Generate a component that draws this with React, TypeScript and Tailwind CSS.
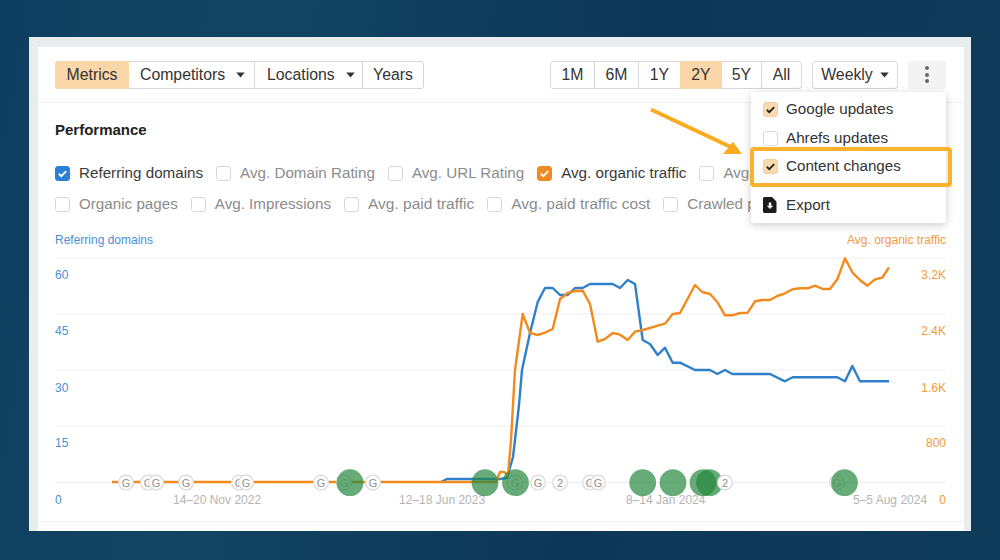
const FONT = "font-['Liberation_Sans','Helvetica_Neue',Arial,sans-serif]";

const BLUE_LINE =
  '441,482 447,479 500,479 507,478 513,457 519,405 522,370 530,333 537.7,302 545,288 552.7,288 560,295 567.7,295 575,288 582.7,288 590,284 612.7,284 620,288 627.7,280 635,284 642.7,340 650,344 657.7,355 665,347.7 672.7,362.7 680,362.7 695,370 710,370 717.3,374 725,370 732.3,374 770,374 785,381.3 792.7,377.3 837.3,377.3 845,381.3 852.3,366 860,381.3 889,381.3';

const ORANGE_LINE =
  '112,482 496,482 500,472 504,472 508,475 511,440 515,370 522.7,314 530,333 537.7,335 545,332.7 552.7,329 560,299 567.7,293 575,291 582.7,290.7 590,304 597.7,341.7 605,339 612.7,333 620,334.7 627.7,340 635,331.7 642.7,330 650,328 657.7,325.7 665,323.7 672.7,314 680,313 695,285 702.3,292 710,294 717.3,302 725,315.3 732.3,315.3 740,313 747.7,312.7 755,301.3 762.3,300 770,300 777.3,296 785,293.3 792.7,289.3 800,288.3 807.7,288.3 815,285.7 822.7,289 830,289 837.3,279.3 845,258.3 852.3,272.3 860,280 867.3,285.7 875,279.3 882.3,277.7 889,267.3';

const GRID_Y = [258, 314, 370, 426, 482.5];
const LEFT_TICKS = [['60', 279], ['45', 335], ['30', 392], ['15', 447], ['0', 504]] as const;
const RIGHT_TICKS = [['3.2K', 279], ['2.4K', 335], ['1.6K', 392], ['800', 447], ['0', 504]] as const;
const DATES = [
  ['14–20 Nov 2022', 173],
  ['12–18 Jun 2023', 399],
  ['8–14 Jan 2024', 626],
  ['5–5 Aug 2024', 853],
] as const;

// marker order matters, later ones sit on top
const MARKERS = [
  ['G', 126], ['G', 148], ['G', 156], ['G', 186], ['G', 239], ['G', 246], ['G', 321],
  ['G', 373], ['G', 538], ['2', 560], ['G', 590], ['G', 598],
] as const;
// these sit under a green circle and barely show through
const HIDDEN_MARKERS = [344, 515, 837];
const GREEN_X = [350, 485, 515.5, 642.7, 673, 703, 709.5, 844.5];

function Marker({ label, x, faint }: { label: string; x: number; faint?: boolean }) {
  return (
    <g>
      <circle cx={x} cy="482.5" r="7.4" fill="#fff" stroke="#dadada" strokeWidth="1.2" />
      <text x={x} y="486.5" fill={faint ? '#c4c4c4' : '#8f8f8f'}>{label}</text>
    </g>
  );
}

function Caret({ className = '' }: { className?: string }) {
  return (
    <svg viewBox="0 0 9 6" className={`w-[9px] h-[6px] ${className}`}>
      <path d="M0.3 0.5h8.4L4.5 5.6z" fill="#333" />
    </svg>
  );
}

function CheckBox({ tone }: { tone?: 'blue' | 'orange' | 'soft' }) {
  const bg =
    tone === 'blue'
      ? 'bg-[#2a7fd6] border-[#2a7fd6]'
      : tone === 'orange'
        ? 'bg-[#f08a24] border-[#f08a24]'
        : tone === 'soft'
          ? 'bg-[#fbd9ae] border-[#f6cf9f]'
          : 'bg-white border-[#d6d8da]';
  return (
    <span className={`w-[15px] h-[15px] shrink-0 rounded-[3px] border flex items-center justify-center ${bg}`}>
      {tone && (
        <svg viewBox="0 0 12 12" className="w-[11px] h-[11px]">
          <path
            d="M2 6.3l2.7 2.6L10 3.4"
            fill="none"
            stroke={tone === 'soft' ? '#222' : '#fff'}
            strokeWidth="2"
          />
        </svg>
      )}
    </span>
  );
}

function Metric({ label, tone, wide }: { label: string; tone?: 'blue' | 'orange'; wide?: boolean }) {
  return (
    <div className="flex items-center gap-[9px] shrink-0">
      <CheckBox tone={tone} />
      <span className={`${wide ? 'text-[15.5px]' : 'text-[15.2px]'} ${tone ? 'text-[#3a3a3a]' : 'text-[#8c8c8c]'}`}>
        {label}
      </span>
    </div>
  );
}

function Chart() {
  return (
    <svg viewBox="38 232 926 289" className="w-[926px] h-[289px] block">
      <g fontFamily="'Liberation Sans', Arial, sans-serif" fontSize="12">
        <text x="55" y="244" fill="#4a90d6">Referring domains</text>
        <text x="946" y="244" fill="#f39a3c" textAnchor="end">Avg. organic traffic</text>
        {GRID_Y.map((y) => (
          <line key={y} x1="55" x2="946" y1={y} y2={y} stroke="#eeeeee" strokeWidth="1" />
        ))}
        {LEFT_TICKS.map(([t, y]) => (
          <text key={t} x="55" y={y} fill="#4a90d6">{t}</text>
        ))}
        {RIGHT_TICKS.map(([t, y]) => (
          <text key={t} x="946" y={y} fill="#f39a3c" textAnchor="end">{t}</text>
        ))}
        {DATES.map(([t, x]) => (
          <text key={t} x={x} y="504" fill="#b4b4b4">{t}</text>
        ))}
      </g>
      <polyline points={BLUE_LINE} fill="none" stroke="#2f7fcb" strokeWidth="2.4" strokeLinejoin="round" />
      <polyline points={ORANGE_LINE} fill="none" stroke="#f28a1e" strokeWidth="2.4" strokeLinejoin="round" />
      <g fontFamily="'Liberation Sans', Arial, sans-serif" fontSize="11" textAnchor="middle">
        {MARKERS.map(([t, x]) => (
          <Marker key={x} label={t} x={x} />
        ))}
        {HIDDEN_MARKERS.map((x) => (
          <Marker key={x} label="G" x={x} faint />
        ))}
      </g>
      {GREEN_X.map((x) => (
        <circle key={x} cx={x} cy="482.7" r="13.4" fill="#25873f" fillOpacity="0.7" />
      ))}
      <g fontFamily="'Liberation Sans', Arial, sans-serif" fontSize="11" textAnchor="middle">
        <Marker label="2" x={725} />
      </g>
    </svg>
  );
}

function MenuRow({ label, checked }: { label: string; checked: boolean }) {
  return (
    <div className="h-[28.5px] flex items-center gap-[8px]">
      <CheckBox tone={checked ? 'soft' : undefined} />
      <span className="text-[15.2px] text-[#333]">{label}</span>
    </div>
  );
}

export default function App() {
  return (
    <div className={`${FONT} w-[1000px] h-[560px] overflow-hidden pt-[37px] pl-[29px] bg-[linear-gradient(100deg,#0f3f60_0%,#114463_25%,#0e3757_60%,#0f3b5b_100%)]`}>
      <div className="w-[942px] h-[494px] bg-[#e9ecec] pt-[10px] pl-[9px] pr-[7px]">
        <div className="relative h-[484px] bg-white">
          {/* toolbar */}
          <div className="h-[56px] pl-[17px] pr-[18px] border-b border-[#eeeeee] flex items-center justify-between">
            <div className="flex h-[28px] text-[15.8px] text-[#333] border border-[#d5d7d9] rounded-[3px]">
              <div className="w-[74px] bg-[#fbd6a8] flex items-center justify-center -my-px -ml-px rounded-l-[3px]">Metrics</div>
              <div className="w-[126px] border-r border-[#d5d7d9] flex items-center gap-[11px] pl-[11px]">
                Competitors <Caret />
              </div>
              <div className="w-[108px] border-r border-[#d5d7d9] flex items-center gap-[11px] pl-[12px]">
                Locations <Caret />
              </div>
              <div className="w-[60px] flex items-center justify-center">Years</div>
            </div>
            <div className="flex items-center">
              <div className="flex h-[28px] text-[15.8px] text-[#333] border border-[#d5d7d9] rounded-[3px] mr-[10px]">
                <div className="w-[44px] border-r border-[#d5d7d9] flex items-center justify-center">1M</div>
                <div className="w-[44px] border-r border-[#d5d7d9] flex items-center justify-center">6M</div>
                <div className="w-[41px] flex items-center justify-center">1Y</div>
                <div className="w-[42px] bg-[#fbd6a8] -my-px flex items-center justify-center">2Y</div>
                <div className="w-[40px] border-r border-[#d5d7d9] flex items-center justify-center">5Y</div>
                <div className="w-[39px] flex items-center justify-center">All</div>
              </div>
              <div className="w-[86px] h-[28px] text-[15.8px] text-[#333] border border-[#d5d7d9] rounded-[3px] flex items-center justify-center gap-[7px] mr-[10px]">
                Weekly <Caret />
              </div>
              <div className="w-[38px] h-[28px] bg-[#f3f3f3] rounded-[3px] flex flex-col items-center justify-center gap-[2.5px]">
                <span className="w-[4px] h-[4px] rounded-full bg-[#666]" />
                <span className="w-[4px] h-[4px] rounded-full bg-[#666]" />
                <span className="w-[4px] h-[4px] rounded-full bg-[#666]" />
              </div>
            </div>
          </div>

          {/* performance */}
          <div className="px-[17px]">
            <h2 className="mt-[17px] h-[20px] leading-[20px] text-[15px] font-bold text-[#222]">Performance</h2>
            {/* rows stop where the open menu starts */}
            <div className="mt-[23px] w-[696px] h-[20px] flex items-center gap-[13px] overflow-hidden">
              <Metric label="Referring domains" tone="blue" />
              <Metric label="Avg. Domain Rating" />
              <Metric label="Avg. URL Rating" />
              <Metric label="Avg. organic traffic" tone="orange" />
              <Metric label="Avg. organic pages" />
            </div>
            <div className="mt-[11px] w-[696px] h-[20px] flex items-center gap-[13px] overflow-hidden">
              <Metric label="Organic pages" />
              <Metric label="Avg. Impressions" />
              <Metric label="Avg. paid traffic" wide />
              <Metric label="Avg. paid traffic cost" wide />
              <Metric label="Crawled pages" />
            </div>
          </div>

          <div className="mt-[18px] border-b border-[#eeeeee]">
            <Chart />
          </div>

          {/* dropdown */}
          <div className="absolute left-[713px] top-[45px] w-[195px] h-[131px] bg-white rounded-[3px] shadow-[0_2px_10px_rgba(0,0,0,0.2)] px-[12px] pt-[3.6px]">
            <MenuRow label="Google updates" checked />
            <MenuRow label="Ahrefs updates" checked={false} />
            <MenuRow label="Content changes" checked />
            <div className="mt-[10px] h-[28px] flex items-center gap-[9px]">
              <svg viewBox="0 0 14 16" className="w-[14px] h-[16px]">
                <path d="M1.5 0H9l4.5 4.5V14.5A1.5 1.5 0 0 1 12 16H1.5A1.5 1.5 0 0 1 0 14.5V1.5A1.5 1.5 0 0 1 1.5 0z" fill="#1c1c1c" />
                <path d="M5.8 5.5h2.4v3.2h2L7 12 3.8 8.7h2z" fill="#fff" />
              </svg>
              <span className="text-[15.2px] text-[#333]">Export</span>
            </div>
          </div>

          {/* annotation */}
          <div className="absolute left-[711.5px] top-[100px] w-[202px] h-[40px] border-[4.5px] border-[#fbb02e] rounded-[4px]" />
          <svg viewBox="0 0 100 50" className="absolute left-[612px] top-[60px] w-[100px] h-[50px]">
            <path d="M1 2.5L85 42" stroke="#fbab1e" strokeWidth="4" fill="none" />
            <path d="M73 47L92 47L83 34.7z" fill="#fbab1e" />
          </svg>
        </div>
      </div>
    </div>
  );
}
